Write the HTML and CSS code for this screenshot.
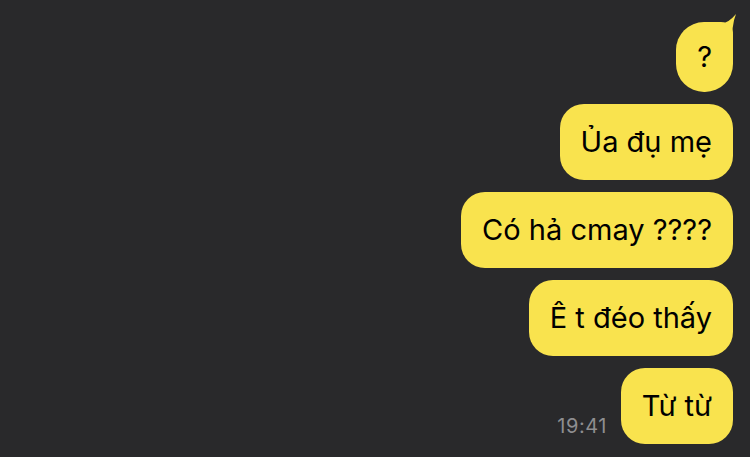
FILE: index.html
```html
<!DOCTYPE html>
<html>
<head>
    <meta charset="utf-8">
    <title>Chat</title>
    <link rel="stylesheet" href="styles.css">
</head>
<body>
    <div class="chat">
        <div class="row">
            <div class="bubble first">?
                <svg class="tail" width="20" height="32" viewBox="0 0 20 32">
                    <path d="M0 8 L1 8 Q9 12 19 0 Q14 12 16 30 L0 30 Z" fill="#f9e34e"/>
                </svg>
            </div>
        </div>
        <div class="row"><div class="bubble">Ủa đụ mẹ</div></div>
        <div class="row"><div class="bubble">Có hả cmay ????</div></div>
        <div class="row"><div class="bubble">Ê t đéo thấy</div></div>
        <div class="row">
            <span class="time">19:41</span>
            <div class="bubble">Từ từ</div>
        </div>
    </div>
</body>
</html>
```

FILE: styles.css
```css
body {
    margin: 0;
    background: #29292b;
    font-family: 'Inter', 'Roboto', sans-serif;
    height: 457px;
    overflow: hidden;
}
.chat {
    display: flex;
    flex-direction: column;
    align-items: flex-end;
    gap: 12px;
    padding: 22px 17px 0 0;
}
.row {
    display: flex;
    align-items: flex-end;
    gap: 14px;
}
.bubble {
    position: relative;
    background: #f9e34e;
    color: #000;
    font-size: 29px;
    line-height: 34px;
    padding: 21px 21px;
    border-radius: 24px;
}
.bubble.first {
    padding: 18px 21px;
    border-radius: 28px;
    border-top-right-radius: 12px;
}
.tail {
    position: absolute;
    top: -8px;
    right: -4px;
}
.time {
    color: #8e8e90;
    font-size: 20px;
    line-height: 20px;
    letter-spacing: 0.5px;
    margin-bottom: 8px;
}
```
